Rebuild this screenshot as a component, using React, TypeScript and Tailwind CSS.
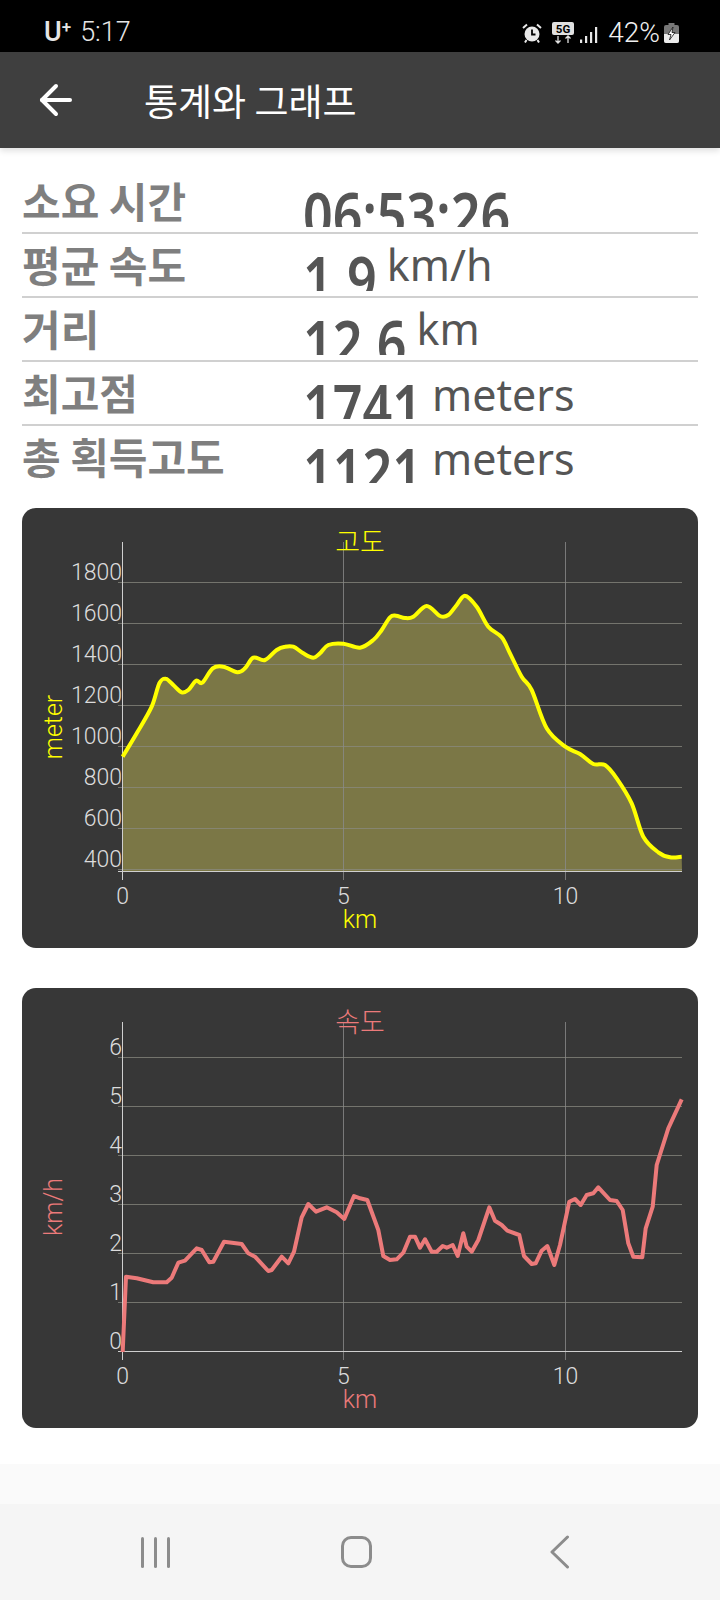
import { ArrowLeft } from "lucide-react";

const krFont = "font-['Noto_Sans_CJK_KR','Noto_Sans',sans-serif]";

const stats = [
    { label: "소요 시간", value: "06:53:26", unit: "", unitClass: "" },
    { label: "평균 속도", value: "1.9", unit: "km/h", unitClass: "ml-[10px]" },
    { label: "거리", value: "12.6", unit: "km", unitClass: "ml-[10px]" },
    { label: "최고점", value: "1741", unit: "meters", unitClass: "ml-[10px] mt-[2px]" },
    { label: "총 획득고도", value: "1121", unit: "meters", unitClass: "ml-[10px] mt-[2px]" },
];

// traced from the screenshot, [x, y] in page pixels
const z = (pts: number[][], ox: number, oy: number) =>
    pts.map(([x, y]) => [ox + x / 3, oy + y / 3]);

const altitude = [
    ...z([[368, 770], [412, 697], [455, 620], [478, 550], [497, 536], [520, 555], [545, 577], [565, 570], [588, 542], [607, 548], [638, 505], [670, 500], [712, 517], [735, 505], [760, 473], [795, 480], [830, 450], [855, 440], [880, 440], [910, 460], [940, 473], [960, 460], [985, 435], [1030, 431], [1080, 443]], 0, 500),
    ...z([[40, 420], [65, 390], [90, 352], [108, 347], [135, 354], [160, 350], [200, 318], [240, 348], [265, 345], [290, 315], [315, 287], [350, 320], [385, 380], [425, 412], [450, 460], [485, 530], [515, 570], [560, 685], [616, 740], [660, 762], [700, 792], [735, 795], [770, 835], [815, 910], [850, 1010], [895, 1057], [930, 1072], [965, 1070]], 360, 500),
];

const speed = [
    ...z([[368, 1116], [378, 890], [410, 895], [460, 907], [500, 907], [515, 893], [535, 848], [555, 842], [590, 805], [605, 810], [628, 847], [640, 845], [672, 785], [725, 792], [745, 820], [765, 830], [805, 873], [815, 870], [845, 830], [865, 850], [882, 815], [905, 712], [925, 672], [948, 695], [980, 682], [1010, 697], [1033, 717], [1062, 648], [1080, 655]], 0, 980),
    ...z([[22, 660], [55, 750], [70, 828], [90, 840], [110, 838], [130, 818], [150, 770], [165, 770], [180, 803], [195, 778], [215, 815], [230, 815], [248, 798], [260, 803], [278, 795], [293, 828], [310, 760], [320, 800], [335, 815], [355, 780], [388, 682], [405, 722], [425, 735], [442, 752], [478, 765], [492, 828], [515, 852], [527, 850], [545, 812], [562, 798], [583, 855], [600, 795], [628, 665], [645, 657], [662, 675], [680, 645], [700, 640], [715, 622], [750, 660], [770, 663], [788, 690], [805, 790], [820, 830], [847, 832], [857, 745], [878, 680], [890, 555], [925, 445], [965, 358]], 360, 980),
];

const toPoints = (pts: number[][]) => pts.map(([x, y]) => `${x.toFixed(1)},${y.toFixed(1)}`).join(" ");

// catmull-rom through the traced points, the altitude line is a smooth one
const toSmooth = (pts: number[][]) => {
    let d = `M${pts[0][0].toFixed(1)} ${pts[0][1].toFixed(1)}`;
    for (let i = 0; i < pts.length - 1; i++) {
        const p0 = pts[Math.max(i - 1, 0)];
        const p1 = pts[i];
        const p2 = pts[i + 1];
        const p3 = pts[Math.min(i + 2, pts.length - 1)];
        const c1x = p1[0] + (p2[0] - p0[0]) / 6;
        const c1y = p1[1] + (p2[1] - p0[1]) / 6;
        const c2x = p2[0] - (p3[0] - p1[0]) / 6;
        const c2y = p2[1] - (p3[1] - p1[1]) / 6;
        d += ` C${c1x.toFixed(1)} ${c1y.toFixed(1)} ${c2x.toFixed(1)} ${c2y.toFixed(1)} ${p2[0].toFixed(1)} ${p2[1].toFixed(1)}`;
    }
    return d;
};

type ChartProps = {
    top: number;
    title: string;
    yTitle: string;
    color: string;
    yTicks: { label: string; grid: number; base: number }[];
    data: number[][];
    fill?: boolean;
};

const Chart = ({ top, title, yTitle, color, yTicks, data, fill }: ChartProps) => {
    const bottom = top + 364;
    const yTitleMid = top + 219;
    return (
        <div className="h-[440px] rounded-[14px] bg-[#373737] overflow-hidden">
            <svg viewBox={`22 ${top} 676 440`} className="block w-full h-full" fontFamily="Roboto, 'Noto Sans CJK KR', sans-serif" fontWeight={300}>
                {fill && (
                    <path
                        d={`${toSmooth(data)} L682 ${bottom} L122.7 ${bottom} Z`}
                        fill="#7b7746"
                    />
                )}
                {yTicks.map((t) => (
                    <line key={t.label} x1={118} x2={682} y1={t.grid} y2={t.grid} stroke="#8a8a80" strokeOpacity={0.75} />
                ))}
                {[343.5, 565.5].map((x) => (
                    <line key={x} x1={x} x2={x} y1={top + 34} y2={bottom + 8} stroke="#8a8a8a" strokeOpacity={0.8} />
                ))}
                <line x1={122.5} x2={122.5} y1={top + 34} y2={bottom + 8} stroke="#cfcfcf" />
                <line x1={118} x2={682} y1={bottom - 0.5} y2={bottom - 0.5} stroke="#cfcfcf" />
                {fill ? (
                    <path d={toSmooth(data)} fill="none" stroke={color} strokeWidth={4} />
                ) : (
                    <polyline points={toPoints(data)} fill="none" stroke={color} strokeWidth={4} strokeLinejoin="round" />
                )}
                {yTicks.map((t) => (
                    <text key={t.label} x={122} y={t.base} textAnchor="end" fontSize={23} fill="#dcdcdc">{t.label}</text>
                ))}
                <text x={122.7} y={top + 396} textAnchor="middle" fontSize={23} fill="#dcdcdc">0</text>
                <text x={343.5} y={top + 396} textAnchor="middle" fontSize={23} fill="#dcdcdc">5</text>
                <text x={565.5} y={top + 396} textAnchor="middle" fontSize={23} fill="#dcdcdc">10</text>
                <text x={360} y={top + 420} textAnchor="middle" fontSize={25} fill={color}>km</text>
                <text x={360} y={top + 44} textAnchor="middle" fontSize={27} fill={color}>{title}</text>
                <text x={62} y={yTitleMid} textAnchor="middle" fontSize={25} fill={color} transform={`rotate(-90 62 ${yTitleMid})`}>{yTitle}</text>
            </svg>
        </div>
    );
};

const altTicks = [
    { label: "1800", grid: 582.5, base: 580 },
    { label: "1600", grid: 623.5, base: 621 },
    { label: "1400", grid: 664.5, base: 662 },
    { label: "1200", grid: 705.5, base: 703 },
    { label: "1000", grid: 746.5, base: 744 },
    { label: "800", grid: 787.5, base: 785 },
    { label: "600", grid: 828.5, base: 826 },
    { label: "400", grid: 869.5, base: 867 },
];

const speedTicks = [
    { label: "6", grid: 1057.5, base: 1055 },
    { label: "5", grid: 1106.5, base: 1104 },
    { label: "4", grid: 1155.5, base: 1153 },
    { label: "3", grid: 1204.5, base: 1202 },
    { label: "2", grid: 1253.5, base: 1251 },
    { label: "1", grid: 1302.5, base: 1300 },
    { label: "0", grid: 1351.5, base: 1349 },
];

const StatusIcons = () => (
    <div className="flex items-center h-full">
        {/* alarm */}
        <svg width="20" height="20" viewBox="0 0 20 20" className="mt-[1px]">
            <circle cx="10" cy="11" r="7.5" fill="#e8e8e8" />
            <path d="M10 6.5V11.5H13.5" fill="none" stroke="#000" strokeWidth="1.8" />
            <path d="M1 5L5 1.5M19 5L15 1.5M4.5 17L3 19.5M15.5 17L17 19.5" stroke="#e8e8e8" strokeWidth="2" />
        </svg>
        {/* 5G with arrows */}
        <svg width="22" height="22" viewBox="0 0 22 22" className="ml-[10px]">
            <rect x="0" y="0" width="22" height="13" rx="2" fill="#e0e0e0" />
            <text x="11" y="11" textAnchor="middle" fontSize="11.5" fontWeight="700" fontFamily="Roboto, sans-serif" fill="#000">5G</text>
            <path d="M6 14V21M3.5 18.5L6 21L8.5 18.5M16 21V14M13.5 16.5L16 14L18.5 16.5" fill="none" stroke="#e0e0e0" strokeWidth="1.3" />
        </svg>
        {/* signal */}
        <svg width="18" height="16" viewBox="0 0 18 16" className="ml-[6px] mt-[5px]">
            <rect x="0" y="12.5" width="2.2" height="3.5" fill="#e8e8e8" />
            <rect x="5" y="9" width="2.2" height="7" fill="#e8e8e8" />
            <rect x="10" y="5" width="2.2" height="11" fill="#e8e8e8" />
            <rect x="15" y="0" width="2.2" height="16" fill="#e8e8e8" />
        </svg>
        <span className="ml-[10px] font-['Roboto',sans-serif] font-light text-[28px] leading-none text-[#f0f0f0]">42%</span>
        {/* battery */}
        <svg width="15" height="20" viewBox="0 0 15 20" className="ml-[4px]">
            <rect x="4.5" y="0" width="6" height="2" fill="#777" />
            <rect x="0" y="2" width="15" height="18" rx="2" fill="#777" />
            <path d="M0 11H15V18a2 2 0 0 1-2 2H2a2 2 0 0 1-2-2Z" fill="#ececec" />
            <path d="M9 4L4 11.5H7L5.5 17L11 9.5H8Z" fill="#fff" stroke="#111" strokeWidth="0.8" />
        </svg>
    </div>
);

export default function App() {
    return (
        <div className="w-[720px] h-[1600px] bg-white flex flex-col overflow-hidden">
            {/* status bar */}
            <div className="h-[52px] bg-black flex items-center justify-between pl-[44px] pr-[41px] pt-[13px] shrink-0">
                <span className="font-['Roboto',sans-serif] text-[27px] leading-none text-[#e6e6e6]">
                    <span className="font-medium">U<sup className="text-[17px] -top-[8px] relative align-baseline">+</sup></span>
                    <span className="ml-[9px] font-light">5:17</span>
                </span>
                <StatusIcons />
            </div>

            {/* toolbar */}
            <div className="h-[96px] bg-[#3f3f3f] flex items-center shadow-[0_3px_6px_rgba(0,0,0,0.12)] shrink-0 relative">
                <ArrowLeft className="ml-[32px] text-white" size={48} strokeWidth={2} />
                <span className={`ml-[64px] text-[37px] leading-none text-white ${krFont}`}>통계와 그래프</span>
            </div>

            {/* stats */}
            <div className="px-[22px] pt-[22px]">
                {stats.map((s, i) => (
                    <div
                        key={s.label}
                        className={`flex h-[64px] ${i < stats.length - 1 ? "border-b-2 border-[#d0d0d0]" : ""}`}
                    >
                        <div className={`w-[281px] shrink-0 text-[42px] font-bold leading-[60px] text-[#7f7f7f] ${krFont}`}>
                            {s.label}
                        </div>
                        <div className="flex items-start">
                            <div className="h-[57px] overflow-hidden">
                                <div className="origin-top scale-y-[1.2] font-['Noto_Sans',sans-serif] font-semibold text-[52px] leading-[74px] text-[#555]">
                                    {s.value}
                                </div>
                            </div>
                            {s.unit && (
                                <div className={`font-['Noto_Sans',sans-serif] text-[43px] leading-[62px] text-[#555] ${s.unitClass}`}>
                                    {s.unit}
                                </div>
                            )}
                        </div>
                    </div>
                ))}
            </div>

            {/* charts */}
            <div className="px-[22px] mt-[18px] flex flex-col gap-[40px]">
                <Chart top={508} title="고도" yTitle="meter" color="#ffff00" yTicks={altTicks} data={altitude} fill />
                <Chart top={988} title="속도" yTitle="km/h" color="#ec7a7a" yTicks={speedTicks} data={speed} />
            </div>

            <div className="flex-1" />
            <div className="h-[40px] bg-[#fafafa] shrink-0" />

            {/* nav bar */}
            <div className="h-[96px] bg-[#f5f5f5] flex items-center shrink-0">
                <div className="ml-[141px] flex gap-[10.5px] h-[31px]">
                    <div className="w-[2.5px] bg-[#8c8c8c] rounded-full" />
                    <div className="w-[2.5px] bg-[#8c8c8c] rounded-full" />
                    <div className="w-[2.5px] bg-[#8c8c8c] rounded-full" />
                </div>
                <div className="ml-[171px] w-[31px] h-[32px] border-[3px] border-[#8c8c8c] rounded-[10px]" />
                <svg width="20" height="34" viewBox="0 0 20 34" className="ml-[178px]">
                    <path d="M17.5 2L2 17L17.5 32" fill="none" stroke="#8c8c8c" strokeWidth="3" strokeLinecap="round" strokeLinejoin="round" />
                </svg>
            </div>
        </div>
    );
}
